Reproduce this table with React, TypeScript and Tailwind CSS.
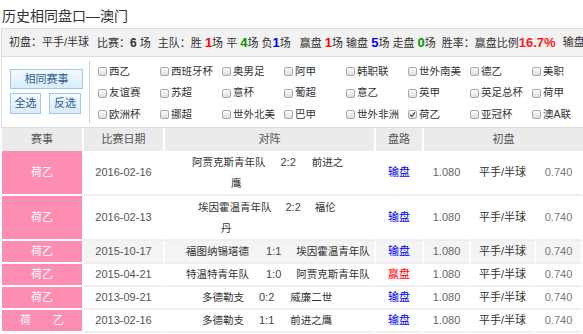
import React from "react";

const FONT = { fontFamily: '"Liberation Sans", "Noto Sans CJK SC", sans-serif' };

function Cb({ checked }: { checked?: boolean }) {
  return (
    <span className="inline-flex items-center justify-center w-[9px] h-[9px] border border-[#a8a8a8] rounded-[2px] bg-linear-to-b from-[#fbfbfb] to-[#dedede] shrink-0">
      {checked && (
        <svg width="7" height="7" viewBox="0 0 7 7">
          <path d="M1 3.6 L2.8 5.4 L6 1.4" fill="none" stroke="#444" strokeWidth="1.3" />
        </svg>
      )}
    </span>
  );
}

const leagues = [
  "西乙", "西班牙杯", "奥男足", "阿甲", "韩职联", "世外南美", "德乙", "美职",
  "友谊赛", "苏超", "意杯", "葡超", "意乙", "英甲", "英足总杯", "荷甲",
  "欧洲杯", "挪超", "世外北美", "巴甲", "世外非洲", "荷乙", "亚冠杯", "澳A联",
];

type Row = {
  league: string;
  date: string;
  home: string;
  score: string;
  away: string;
  pl: string;
  g1: string;
  g2: string;
  line2?: string;
  line2pl?: string;
  win?: boolean;
  gray?: boolean;
  tall?: boolean;
};

const rows: Row[] = [
  { league: "荷乙", date: "2016-02-16", home: "阿贾克斯青年队", score: "2:2", away: "前进之", line2: "鹰", line2pl: "pl-[66px]", pl: "pl-[27px]", g1: "ml-[15px]", g2: "ml-[16px]", tall: true },
  { league: "荷乙", date: "2016-02-13", home: "埃因霍温青年队", score: "2:2", away: "福伦", line2: "丹", line2pl: "pl-[56px]", pl: "pl-[33px]", g1: "ml-[14px]", g2: "ml-[14px]", tall: true },
  { league: "荷乙", date: "2015-10-17", home: "福图纳锡塔德", score: "1:1", away: "埃因霍温青年队", pl: "pl-[21px]", g1: "ml-[17px]", g2: "ml-[15px]", gray: true },
  { league: "荷乙", date: "2015-04-21", home: "特温特青年队", score: "1:0", away: "阿贾克斯青年队", pl: "pl-[21px]", g1: "ml-[17px]", g2: "ml-[15px]", win: true },
  { league: "荷乙", date: "2013-09-21", home: "多德勒支", score: "0:2", away: "威廉二世", pl: "pl-[37px]", g1: "ml-[15px]", g2: "ml-[16px]" },
  { league: "荷\u3000\u3000乙", date: "2013-02-16", home: "多德勒支", score: "1:1", away: "前进之鹰", pl: "pl-[37px]", g1: "ml-[15px]", g2: "ml-[16px]" },
];

function Btn({ children, w }: { children: React.ReactNode; w: string }) {
  return (
    <div className={`${w} h-[20px] flex items-center justify-center border border-[#9cc7ee] bg-linear-to-b from-[#f5faff] to-[#d9ebfc] text-[#2a5d98] text-[11px]`}>
      {children}
    </div>
  );
}

export default function App() {
  return (
    <div className="w-[583px] h-[334px] overflow-hidden bg-white text-[#333]" style={FONT}>
      {/* title */}
      <div className="h-[28px] pl-[2px] pt-[6px] text-[14px] leading-[20px] text-[#333]">历史相同盘口—澳门</div>

      {/* summary */}
      <div className="w-[640px] ml-[1px] h-[29px] flex items-center pl-[7px] whitespace-pre text-[11px] bg-[#f2f2f2] border border-[#dcdcdc] text-[#333]">
        <span>初盘：平手/半球</span>
        <span className="ml-[8px]">比赛：<b className="text-[12px] text-[#333]">6</b> 场</span>
        <span className="ml-[7px]">主队：胜 <b className="text-[13px] text-[#ff0000]">1</b>场 平 <b className="text-[13px] text-[#009900]">4</b>场 负<b className="text-[13px] text-[#0000ff]">1</b>场</span>
        <span className="ml-[9px]">赢盘 <b className="text-[13px] text-[#ff0000]">1</b>场 输盘 <b className="text-[13px] text-[#0000ff]">5</b>场 走盘 <b className="text-[13px] text-[#009900]">0</b>场</span>
        <span className="ml-[6px]">胜率：赢盘比例<b className="text-[13px] text-[#ff1a1a]">16.7%</b></span>
        <span className="ml-[7px]">输盘</span>
      </div>

      {/* filter */}
      <div className="w-[640px] ml-[1px] h-[71px] flex border-x border-b border-[#dcdcdc] bg-white">
        <div className="w-[87px] pl-[8px] pt-[12px] flex flex-col gap-[4px]">
          <Btn w="w-[73px]">相同赛事</Btn>
          <div className="flex gap-[8px]">
            <Btn w="w-[31px] h-[21px]">全选</Btn>
            <Btn w="w-[32px] h-[21px]">反选</Btn>
          </div>
        </div>
        <div className="w-px h-[62px] mt-[4px] bg-[#cdd6e0]" />
        <div className="ml-[8px] pt-[4px] grid grid-cols-[repeat(8,62px)] auto-rows-[21.5px]">
          {leagues.map((l) => (
            <div key={l} className="flex items-center gap-[2px] text-[10.5px] text-[#333] whitespace-nowrap">
              <Cb checked={l === "荷乙"} />
              <span>{l}</span>
            </div>
          ))}
        </div>
      </div>

      {/* table */}
      <div className="ml-[2px] w-[581px]">
        <div className="grid grid-cols-[82px_81px_211px_48px_159px] h-[23px] bg-[#ebebeb] text-[11px] text-[#555]">
          {["赛事", "比赛日期", "对阵", "盘路", "初盘"].map((h, i) => (
            <div key={h} className={`flex items-center justify-center ${i < 4 ? "border-r-2 border-white" : ""}`}>
              {h}
            </div>
          ))}
        </div>
        {rows.map((r, idx) => {
          const h = r.tall ? "h-[45px]" : "h-[23px]";
          const bg = r.gray ? "bg-[#f4f4f4]" : "bg-white";
          const cell = `flex items-center justify-center border-r-2 border-r-white border-b-2 border-b-[#efefef] ${bg}`;
          return (
            <div key={idx} className={`grid grid-cols-[82px_81px_211px_48px_47px_65px_47px] ${h} text-[11px]`}>
              <div className="flex items-center justify-center bg-[#fe8db2] text-white border-r-2 border-r-white border-b-2 border-b-white whitespace-pre">
                {r.league}
              </div>
              <div className={`${cell} text-[#555]`}>{r.date}</div>
              <div className={`${cell} !justify-start`}>
                <div className="flex flex-col text-[10.5px] leading-[21px] text-[#333]">
                  <div className={`flex ${r.pl} whitespace-nowrap`}>
                    <span>{r.home}</span>
                    <span className={`${r.g1} text-[11px] text-[#444]`}>{r.score}</span>
                    <span className={r.g2}>{r.away}</span>
                  </div>
                  {r.line2 && <div className={r.line2pl}>{r.line2}</div>}
                </div>
              </div>
              <div className={`${cell} ${r.win ? "text-[#ff0000]" : "text-[#0000ff]"}`}>{r.win ? "赢盘" : "输盘"}</div>
              <div className={`${cell} text-[#666]`}>1.080</div>
              <div className={`${cell} text-[#333]`}>平手/半球</div>
              <div className={`${cell} text-[#777] border-r-0`}>0.740</div>
            </div>
          );
        })}
      </div>
    </div>
  );
}
